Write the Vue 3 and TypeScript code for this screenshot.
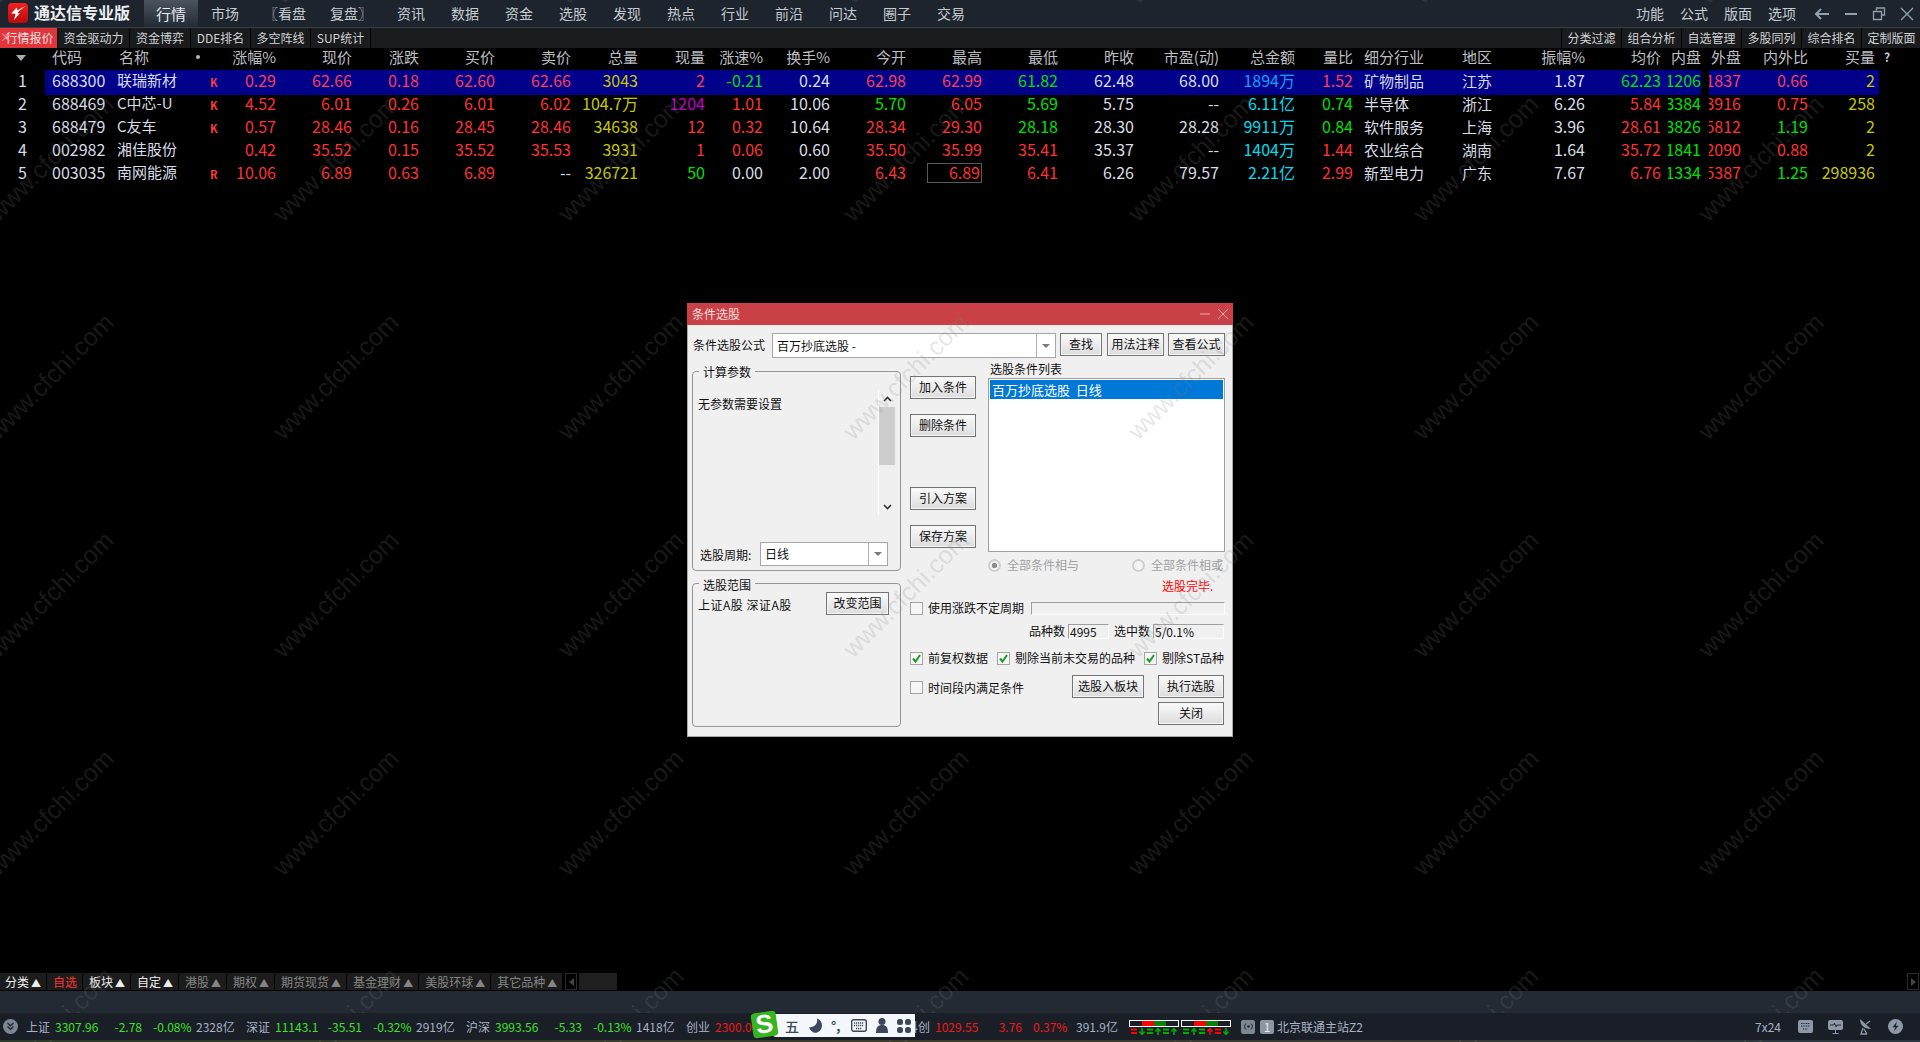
<script setup lang="ts">
type Cell = [string, string, boolean?]
type Mark = [string, boolean]
interface Row { code: string; name: string; mark: string; a: Cell[]; sector: string; region: string; b: Cell[] }

const rows: Row[] = [
  { code: '688300', name: '联瑞新材', mark: 'K',
    a: [['0.29','r'],['62.66','r'],['0.18','r'],['62.60','r'],['62.66','r'],['3043','y'],['2','r'],['-0.21','g'],['0.24','w'],['62.98','r'],['62.99','r'],['61.82','g'],['62.48','w'],['68.00','w'],['1894万','b'],['1.52','r']],
    sector: '矿物制品', region: '江苏',
    b: [['1.87','w'],['62.23','g'],['1206','g'],['1837','r'],['0.66','r'],['2','y']] },
  { code: '688469', name: 'C中芯-U', mark: 'K',
    a: [['4.52','r'],['6.01','r'],['0.26','r'],['6.01','r'],['6.02','r'],['104.7万','y'],['1204','p'],['1.01','r'],['10.06','w'],['5.70','g'],['6.05','r'],['5.69','g'],['5.75','w'],['--','w'],['6.11亿','c'],['0.74','g']],
    sector: '半导体', region: '浙江',
    b: [['6.26','w'],['5.84','r'],['3384','g'],['3916','r'],['0.75','r'],['258','y']] },
  { code: '688479', name: 'C友车', mark: 'K',
    a: [['0.57','r'],['28.46','r'],['0.16','r'],['28.45','r'],['28.46','r'],['34638','y'],['12','r'],['0.32','r'],['10.64','w'],['28.34','r'],['29.30','r'],['28.18','g'],['28.30','w'],['28.28','w'],['9911万','c'],['0.84','g']],
    sector: '软件服务', region: '上海',
    b: [['3.96','w'],['28.61','r'],['3826','g'],['5812','r'],['1.19','g'],['2','y']] },
  { code: '002982', name: '湘佳股份', mark: '',
    a: [['0.42','r'],['35.52','r'],['0.15','r'],['35.52','r'],['35.53','r'],['3931','y'],['1','r'],['0.06','r'],['0.60','w'],['35.50','r'],['35.99','r'],['35.41','r'],['35.37','w'],['--','w'],['1404万','c'],['1.44','r']],
    sector: '农业综合', region: '湖南',
    b: [['1.64','w'],['35.72','r'],['1841','g'],['2090','r'],['0.88','r'],['2','y']] },
  { code: '003035', name: '南网能源', mark: 'R',
    a: [['10.06','r'],['6.89','r'],['0.63','r'],['6.89','r'],['--','w'],['326721','y'],['50','g'],['0.00','w'],['2.00','w'],['6.43','r'],['6.89','r',true],['6.41','r'],['6.26','w'],['79.57','w'],['2.21亿','c'],['2.99','r']],
    sector: '新型电力', region: '广东',
    b: [['7.67','w'],['6.76','r'],['1334','g'],['5387','r'],['1.25','g'],['298936','y']] }
]

const headA = ['涨幅%','现价','涨跌','买价','卖价','总量','现量','涨速%','换手%','今开','最高','最低','昨收','市盈(动)','总金额','量比']
const headB = ['振幅%','均价','内盘','外盘','内外比','买量']
const menu = ['资讯','数据','资金','选股','发现','热点','行业','前沿','问达','圈子','交易']
const subLeft = ['行情报价','资金驱动力','资金博弈','DDE排名','多空阵线','SUP统计']
const subRight = ['分类过滤','组合分析','自选管理','多股同列','综合排名','定制版面']
const tabs: [string, string, boolean][] = [
  ['分类','on',true],['自选','red',false],['板块','on',true],['自定','on',true],['港股','dim',true],['期权','dim',true],
  ['期货现货','dim',true],['基金理财','dim',true],['美股环球','dim',true],['其它品种','dim',true]
]
const quotes = [
  { n: '上证', v: '3307.96', c: '-2.78', p: '-0.08%', a: '2328亿', k: 'up' },
  { n: '深证', v: '11143.1', c: '-35.51', p: '-0.32%', a: '2919亿', k: 'up' },
  { n: '沪深', v: '3993.56', c: '-5.33', p: '-0.13%', a: '1418亿', k: 'up' },
  { n: '创业', v: '2300.00', c: '', p: '', a: '', k: 'dn' },
  { n: '科创', v: '1029.55', c: '3.76', p: '0.37%', a: '391.9亿', k: 'dn' }
]
const meters: Mark[][] = [
  [['e', true], ['d', false], ['e', false], ['u', false], ['e', false], ['u', false]],
  [['e', false], ['u', false], ['e', false], ['u', true], ['e', true], ['d', false]]
]
const wm = Array.from({ length: 63 }, (_, i) => i)
</script>

<template>
  <div class="page">
    <header class="top">
      <svg class="logo" width="20" height="20" viewBox="0 0 20 20">
        <defs><linearGradient id="lg" x1="0" y1="0" x2="0" y2="1"><stop offset="0" stop-color="#f5201f"/><stop offset="1" stop-color="#b80b0c"/></linearGradient></defs>
        <rect width="20" height="20" rx="4" fill="url(#lg)"/>
        <path d="M17.5 3 L9.5 7.2 L8.6 4.6 L3.2 10.4 L7.6 10.8 L6 17 L11.6 10.6 L9.4 9.6 Z" fill="#fff"/>
      </svg>
      <span class="title">通达信专业版</span>
      <nav class="nav">
        <span class="item active">行情</span>
        <span class="item">市场</span>
        <span class="item wide">〖看盘</span>
        <span class="item wide">复盘〗</span>
        <span v-for="m in menu" :key="m" class="item">{{ m }}</span>
      </nav>
      <div class="right">
        <span>功能</span><span>公式</span><span>版面</span><span>选项</span>
        <svg class="win back" width="16" height="14" viewBox="0 0 16 14"><path d="M15 7H2M7 2L2 7l5 5" fill="none" stroke="#8fa0ae" stroke-width="2"/></svg>
        <svg class="win" width="14" height="14" viewBox="0 0 14 14"><path d="M1 7h12" stroke="#8fa0ae" stroke-width="2"/></svg>
        <svg class="win" width="14" height="14" viewBox="0 0 14 14"><path d="M4.5 3.5V1h8v7H10M1.500 4.500h8v8h-8z" fill="none" stroke="#8fa0ae" stroke-width="1.300"/></svg>
        <svg class="win" width="14" height="14" viewBox="0 0 14 14"><path d="M1 1l12 12M13 1L1 13" stroke="#8fa0ae" stroke-width="1.400"/></svg>
      </div>
    </header>

    <div class="subbar">
      <div class="sub-left">
        <span v-for="(s, i) in subLeft" :key="s" class="sub" :class="{ 'sub-on': i === 0 }">{{ s }}</span>
      </div>
      <div class="sub-right">
        <span v-for="s in subRight" :key="s" class="sub">{{ s }}</span>
      </div>
    </div>

    <main class="main">
      <section class="table">
        <div class="grid head">
          <div class="cell idx"><i class="sort"></i></div>
          <div class="cell code hc">代码</div>
          <div class="cell name hn">名称</div>
          <div class="cell mark"><b class="dot"></b></div>
          <div v-for="h in headA" :key="h" class="cell num">{{ h }}</div>
          <div class="cell sector">细分行业</div>
          <div class="cell region">地区</div>
          <div v-for="(h, j) in headB" :key="h" class="cell num" :class="{ avg: j === 1, gap8: j === 3 }">{{ h }}</div>
          <div class="cell"></div>
          <div class="cell qm">?</div>
        </div>
        <div v-for="(r, i) in rows" :key="r.code" class="grid row" :class="{ sel: i === 0 }">
          <div class="cell idx">{{ i + 1 }}</div>
          <div class="cell code">{{ r.code }}</div>
          <div class="cell name">{{ r.name }}</div>
          <div class="cell mark"><span class="flag">{{ r.mark }}</span></div>
          <div v-for="(c, j) in r.a" :key="j" class="cell num v" :class="c[1]">
            <span :class="{ box: c[2] }">{{ c[0] }}</span>
          </div>
          <div class="cell sector">{{ r.sector }}</div>
          <div class="cell region">{{ r.region }}</div>
          <div v-for="(c, j) in r.b" :key="'b' + j" class="cell num v" :class="[c[1], { avg: j === 1, clip: j === 2 || j === 3, gap8: j === 3 }]">
            <span>{{ c[0] }}</span>
          </div>
          <div class="cell"></div>
        </div>
      </section>

      <section class="dialog">
        <div class="dlg-title">
          <span>条件选股</span>
          <span class="dlg-win">
            <svg width="10" height="10" viewBox="0 0 10 10"><path d="M0 5h10" stroke="#eea9ab"/></svg>
            <svg width="10" height="10" viewBox="0 0 10 10"><path d="M0 0l10 10M10 0L0 10" stroke="#eea9ab"/></svg>
          </span>
        </div>
        <div class="dlg-body">
          <div class="formula">
            <label class="f-label">条件选股公式</label>
            <div class="combo f-combo"><span class="combo-text">百万抄底选股 -</span><span class="combo-btn"><i></i></span></div>
            <button class="btn b42">查找</button>
            <button class="btn b57 g5">用法注释</button>
            <button class="btn b57">查看公式</button>
          </div>
          <div class="panes">
            <div class="left">
              <div class="group g1">
                <span class="legend">计算参数</span>
                <div class="params">
                  <div class="params-text">无参数需要设置</div>
                  <div class="scroll">
                    <span class="sb"><svg width="9" height="6" viewBox="0 0 9 6"><path d="M1 5l3.500-3.500L8 5" fill="none" stroke="#333" stroke-width="1.600"/></svg></span>
                    <span class="thumb"></span>
                    <span class="sb end"><svg width="9" height="6" viewBox="0 0 9 6"><path d="M1 1l3.500 3.500L8 1" fill="none" stroke="#333" stroke-width="1.600"/></svg></span>
                  </div>
                </div>
                <div class="period">
                  <label>选股周期:</label>
                  <div class="combo p-combo"><span class="combo-text">日线</span><span class="combo-btn"><i></i></span></div>
                </div>
              </div>
              <div class="group g2">
                <span class="legend">选股范围</span>
                <div class="scope">
                  <span class="scope-text">上证A股 深证A股</span>
                  <button class="btn b63">改变范围</button>
                </div>
              </div>
            </div>
            <div class="rightcol">
              <div class="upper">
                <div class="mid">
                  <button class="btn b66">加入条件</button>
                  <button class="btn b66">删除条件</button>
                  <button class="btn b66 far">引入方案</button>
                  <button class="btn b66">保存方案</button>
                </div>
                <div class="listcol">
                  <div class="list-label">选股条件列表</div>
                  <div class="list"><div class="list-sel">百万抄底选股&nbsp;&nbsp;日线</div></div>
                  <div class="radios">
                    <span class="radio-item"><i class="radio on"></i>全部条件相与</span>
                    <span class="radio-item"><i class="radio"></i>全部条件相或</span>
                  </div>
                </div>
              </div>
              <div class="done">选股完毕.</div>
              <div class="line-period">
                <i class="cb"></i><span class="cb-label">使用涨跌不定周期</span><span class="field grow"></span>
              </div>
              <div class="counts">
                <span>品种数</span><span class="field w41">4995</span>
                <span class="ml">选中数</span><span class="field w71">5/0.1%</span>
              </div>
              <div class="checks">
                <span class="chk c1"><i class="cb"><svg width="11" height="11" viewBox="0 0 11 11"><path d="M2 5.500l2.500 3L9 2" fill="none" stroke="#1d9a2c" stroke-width="2"/></svg></i><span class="cb-label">前复权数据</span></span>
                <span class="chk c2"><i class="cb"><svg width="11" height="11" viewBox="0 0 11 11"><path d="M2 5.500l2.500 3L9 2" fill="none" stroke="#1d9a2c" stroke-width="2"/></svg></i><span class="cb-label">剔除当前未交易的品种</span></span>
                <span class="chk"><i class="cb"><svg width="11" height="11" viewBox="0 0 11 11"><path d="M2 5.500l2.500 3L9 2" fill="none" stroke="#1d9a2c" stroke-width="2"/></svg></i><span class="cb-label">剔除ST品种</span></span>
              </div>
              <div class="actions">
                <span class="chk timed"><i class="cb"></i><span class="cb-label">时间段内满足条件</span></span>
                <button class="btn b72">选股入板块</button>
                <button class="btn b66">执行选股</button>
              </div>
              <div class="close"><button class="btn b66">关闭</button></div>
            </div>
          </div>
        </div>
      </section>

      <div class="tabs">
        <span v-for="t in tabs" :key="t[0]" class="tab" :class="t[1]">{{ t[0] }}<em v-if="t[2]" class="tri">▲</em></span>
        <span class="tscroll"><i class="tl"></i></span>
        <span class="tblock"></span>
        <span class="tscroll endscroll"><i class="tr"></i></span>
      </div>

      <div class="wm" aria-hidden="true">
        <div v-for="n in wm" :key="n" class="wm-cell"><span>www.cfchi.com</span></div>
      </div>
    </main>

    <div class="band"></div>

    <footer class="status">
      <svg class="st-first" width="15" height="15" viewBox="0 0 15 15">
        <circle cx="7.500" cy="7.500" r="7.500" fill="#7b8794"/>
        <path d="M4.500 4l3 2.800L10.500 4M4.500 7.500l3 2.800 3-2.800" fill="none" stroke="#20262e" stroke-width="1.300"/>
      </svg>
      <div v-for="q in quotes" :key="q.n" class="quote" :class="q.k">
        <span class="q-n">{{ q.n }}</span>
        <span class="q-v">{{ q.v }}</span>
        <span class="q-c">{{ q.c }}</span>
        <span class="q-p">{{ q.p }}</span>
        <span class="q-a">{{ q.a }}</span>
      </div>
      <div v-for="(ms, k) in meters" :key="k" class="meter" :class="{ m2: k === 1 }">
        <div class="m-bar"><i></i><i class="mr"></i><i class="mg"></i><i></i></div>
        <svg width="50" height="7" viewBox="0 0 50 7">
          <g v-for="(m, i) in ms" :key="i" :transform="`translate(${i * 8 + 2} 0)`">
            <path v-if="m[0] === 'e'" d="M0 1.500h6M0 5h6" :stroke="m[1] ? '#f00' : '#0a0'" stroke-width="2"/>
            <path v-else-if="m[0] === 'u'" d="M3 7V1M.5 3.500L3 .5l2.500 3" fill="none" :stroke="m[1] ? '#f00' : '#0a0'" stroke-width="1.600"/>
            <path v-else d="M3 0v6M.5 3.500L3 6.500l2.500-3" fill="none" :stroke="m[1] ? '#f00' : '#0a0'" stroke-width="1.600"/>
          </g>
        </svg>
      </div>
      <span class="chip sig">
        <svg width="9" height="9" viewBox="0 0 9 9"><circle cx="4.500" cy="4.500" r="1.300" fill="#20262e"/><path d="M2 1.500a4 4 0 000 6M7 1.500a4 4 0 010 6" fill="none" stroke="#20262e"/></svg>
      </span>
      <span class="chip num1">1</span>
      <span class="server">北京联通主站Z2</span>
      <span class="spacer"></span>
      <span class="sevenx">7x24</span>
      <svg class="ic" width="15" height="13" viewBox="0 0 15 13"><rect width="15" height="13" rx="2" fill="#8d99a8"/><path d="M3 3.500h9M3 6h9M5 9h5" stroke="#20262e" stroke-dasharray="1 .7"/></svg>
      <svg class="ic" width="15" height="14" viewBox="0 0 15 14"><rect width="15" height="10" rx="2" fill="#8d99a8"/><path d="M2 5h3.500l1-2 1.500 4 1-2h4" fill="none" stroke-width="1" stroke="#20262e"/><path d="M7.500 10v3M4.500 13.500h6" stroke="#8d99a8"/></svg>
      <svg class="ic" width="15" height="17" viewBox="0 0 15 17"><path d="M2 1c0 6 4 10 11 10z" fill="#8d99a8"/><path d="M8 6l4-3M5 10l-2 6h6M6 11l3 5" stroke="#8d99a8" fill="none" stroke-width="1.300"/></svg>
      <svg class="ic" width="15" height="15" viewBox="0 0 15 15"><circle cx="7.500" cy="7.500" r="7.500" fill="#8d99a8"/><path d="M9 2.500L4.500 8.300h2.700L6 12.500l4.500-5.800H7.800z" fill="#20262e"/></svg>

      <div class="ime">
        <div class="ime-logo"><span>S</span></div>
        <div class="ime-panel">
          <span class="ime-wu">五</span>
          <svg width="14" height="15" viewBox="0 0 14 15"><path d="M9 0c1 5-2 9-8 9 1.500 4 5 6 8 5s5-4 5-7-2-6-5-7z" fill="#3c4759" transform="translate(0 .5)"/></svg>
          <span class="ime-p">°,</span>
          <svg width="16" height="13" viewBox="0 0 16 13"><rect x=".7" y=".7" width="14.600" height="11.600" rx="2" fill="none" stroke="#3c4759" stroke-width="1.400"/><path d="M3 4h10M3 6.500h10M5 9.500h6" stroke="#3c4759" stroke-width="1.400" stroke-dasharray="1.200 .8"/></svg>
          <svg width="12" height="15" viewBox="0 0 12 15"><circle cx="6" cy="3.500" r="3.500" fill="#3c4759"/><path d="M0 15c0-6 2-8 6-8s6 2 6 8z" fill="#3c4759"/></svg>
          <svg width="14" height="14" viewBox="0 0 14 14" fill="#3c4759"><rect width="6" height="6" rx="2.500"/><rect x="8" width="6" height="6" rx="2.500"/><rect y="8" width="6" height="6" rx="2.500"/><rect x="8" y="8" width="6" height="6" rx="2.500"/></svg>
        </div>
      </div>
    </footer>
    <div class="strip"></div>
  </div>
</template>

<style>
html, body { margin: 0; background: #000; overflow: hidden; }
</style>

<style scoped>
.page {
  width: 1920px; height: 1042px; display: flex; flex-direction: column; background: #000; overflow: hidden;
  font-family: "Noto Sans CJK SC", "Liberation Sans", sans-serif;
}
.top {
  height: 27px; flex: none; display: flex; align-items: stretch; background: #1d242e;
  border-bottom: 1px solid #3a4048; color: #c6cbd0; font-size: 14px; line-height: 27px;
}
.logo { margin: 3px 0 0 8px; flex: none; }
.title { width: 110px; margin-left: 6px; color: #eceff2; font-size: 16px; font-weight: 700; line-height: 25px; }
.nav { display: flex; }
.item { width: 54px; text-align: center; }
.wide { width: 66px; }
.active { background: linear-gradient(#4a545f, #222a35); color: #e8ecef; font-size: 15px; }
.right { margin-left: auto; display: flex; align-items: center; gap: 14px; padding-right: 6px; line-height: 25px; }
.right span { width: 28px; margin-right: 2px; }
.win { flex: none; }
.back { margin-left: 2px; }
.subbar {
  height: 20px; flex: none; display: flex; justify-content: space-between; background: #1a1b1d;
  font-size: 12px; line-height: 20px; color: #cfd3d6;
}
.sub-left { display: grid; grid-template-columns: 58px 72px 61px 60px 60px 60px; }
.sub-right { display: grid; grid-template-columns: repeat(6, 60px); margin-right: -1px; }
.sub { text-align: center; border-right: 1px solid #000; white-space: nowrap; position: relative; }
.sub-right .sub { border-right: 0; border-left: 1px solid #000; }
.sub-on { background: #e0353b; color: #f6e3e3; padding-left: 2px; }
.sub-on::before { content: "×"; position: absolute; left: 0; top: -1px; color: #f2a0a2; }

.main { flex: 1; min-height: 0; position: relative; display: flex; flex-direction: column; }
.table { flex: 1; min-height: 0; }
.grid {
  display: grid;
  grid-template-columns: 45px 72px 75px 33px 51px 76px 67px 76px 76px 67px 67px 58px 67px 76px 76px 76px 76px 85px 76px 58px 109px 63px 60px 83px 33px 40px 67px 67px 4px 41px;
}
.head { height: 22px; line-height: 18px; color: #bdbfc2; font-size: 15px; }
.row { height: 23px; line-height: 21px; font-size: 15px; color: #d6dde6; }
.cell { white-space: nowrap; min-width: 0; }
.idx { text-align: center; font-size: 16px; }
.head .idx { display: flex; align-items: center; justify-content: center; padding-right: 4px; padding-bottom: 2px; }
.sort { width: 0; height: 0; border: 5px solid transparent; border-top: 6px solid #a8acb0; border-bottom: 0; }
.code { padding-left: 7px; font-size: 16px; }
.head .code { font-size: 15px; }
.hn { padding-left: 2px; }
.row .name { line-height: 19px; }
.dot { display: block; width: 4px; height: 4px; border-radius: 50%; background: #b8b8b8; margin: 7px 0 0 4px; }
.flag { display: block; margin-left: 18px; font-size: 11px; font-weight: 700; color: #ff3c3c; line-height: 25px; }
.num { text-align: right; }
.num.v { font-size: 16px; }
.avg { padding-right: 7px; }
.gap8 { margin-left: 8px; }
.clip { display: flex; justify-content: flex-end; overflow: hidden; }
.sector { padding-left: 11px; }
.qm { padding-left: 5px; font-size: 12px; font-weight: 700; color: #ccc; }
.sel > .cell:not(:first-child) { background: #00008b; }
.r { color: #ff3232; }
.sel .r { color: #ff3c55; }
.g { color: #00e000; }
.y { color: #c8c800; }
.w { color: #d8dee6; }
.c { color: #00dcee; }
.b { color: #00a4ff; }
.p { color: #c000c8; }
.box {
  display: inline-block; width: 55px; height: 20px; box-sizing: border-box; border: 1px solid #5a5a5a;
  line-height: 17px; padding-right: 1px; vertical-align: top; margin-top: 1px;
}

.dialog {
  position: absolute; left: 687px; top: 255px; width: 546px; height: 434px; box-sizing: border-box;
  background: #f0f0f0; border: 1px solid #a8a8a8; border-top: 0; color: #111; font-size: 12px;
}
.dlg-title {
  height: 22px; margin: 0 -1px; background: #c94146; color: #f7dede; line-height: 21px; padding-left: 5px;
  display: flex; justify-content: space-between;
}
.dlg-win { display: flex; align-items: center; gap: 8px; padding-right: 5px; }
.dlg-body { padding-left: 4px; }
.formula { display: flex; align-items: flex-start; height: 25px; margin: 8px 0 0 1px; gap: 4px; }
.f-label { width: 75px; line-height: 23px; }
.combo {
  display: flex; box-sizing: border-box; background: #fff; border: 1px solid #a6a6a6;
}
.f-combo { width: 284px; height: 25px; }
.p-combo { width: 128px; height: 24px; }
.combo-text { flex: 1; padding-left: 4px; line-height: 22px; }
.f-combo .combo-text { line-height: 24px; }
.combo-btn { width: 18px; border-left: 1px solid #b0b0b0; display: flex; align-items: center; justify-content: center; }
.combo-btn i { width: 0; height: 0; border: 4px solid transparent; border-top: 4px solid #7a7a7a; border-bottom: 0; }
.btn {
  box-sizing: border-box; height: 23px; padding: 0 0 2px; font: inherit; color: #111; flex: none;
  background: linear-gradient(#fbfbfb, #dcdcdc); border: 1px solid #757575; box-shadow: inset 0 0 0 1px #f6f6f6;
}
.b42 { width: 42px; }
.g5 { margin-left: 1px; }
.b57 { width: 57px; }
.b63 { width: 63px; }
.b66 { width: 66px; }
.b72 { width: 72px; }
.panes { display: flex; gap: 9px; }
.left { width: 209px; flex: none; }
.group { position: relative; box-sizing: border-box; border: 1px solid #979797; border-radius: 4px; }
.g1 { height: 200px; margin-top: 13px; padding: 0 5px; }
.g2 { height: 144px; margin-top: 12px; padding: 0 5px; }
.legend { position: absolute; left: 6px; top: -8px; padding: 0 4px; background: #f0f0f0; line-height: 16px; }
.g2 .legend { top: -7px; }
.params { display: flex; height: 125px; margin-top: 18px; }
.params-text { flex: 1; padding-top: 5px; line-height: 18px; }
.scroll { width: 16px; border-left: 1px solid #fff; display: flex; flex-direction: column; }
.sb { height: 17px; display: flex; align-items: center; justify-content: center; flex: none; }
.thumb { height: 58px; background: #cdcdcd; flex: none; }
.end { margin-top: auto; }
.period { display: flex; align-items: center; margin-top: 27px; padding-left: 2px; }
.period label { width: 60px; }
.scope { display: flex; justify-content: space-between; align-items: flex-start; margin-top: 8px; padding-right: 6px; }
.scope-text { padding-top: 4px; line-height: 18px; letter-spacing: .5px; }
.rightcol { width: 315px; flex: none; }
.upper { display: flex; gap: 12px; height: 215px; }
.mid { width: 66px; display: flex; flex-direction: column; gap: 15px; padding-top: 18px; flex: none; }
.far { margin-top: 35px; }
.listcol { width: 237px; flex: none; }
.list-label { margin-top: 4px; line-height: 14px; padding-left: 2px; }
.list { height: 174px; box-sizing: border-box; margin-top: 2px; background: #fff; border: 1px solid #a0a0a0; padding: 1px; }
.list-sel { height: 19px; background: #0078d7; color: #fff; font-size: 13px; line-height: 19px; padding-left: 2px; }
.radios { display: flex; justify-content: space-between; margin-top: 5px; line-height: 16px; color: #a2a2a2; }
.radio-item { display: flex; align-items: center; gap: 6px; margin-right: 2px; }
.radio { width: 9px; height: 9px; border: 2px solid #cfcfcf; border-radius: 50%; box-sizing: content-box; background: #f4f4f4; }
.radio.on { background: radial-gradient(circle, #8d8d8d 0 2.500px, #f4f4f4 3px); }
.done { margin-top: 5px; height: 16px; line-height: 16px; padding-left: 252px; color: #f00; }
.line-period { display: flex; align-items: center; height: 14px; margin-top: 7px; }
.cb {
  width: 13px; height: 13px; box-sizing: border-box; flex: none; border: 1px solid #a6a6a6; background: #f6f6f6;
  display: inline-flex; align-items: center; justify-content: center;
}
.cb-label { margin-left: 5px; white-space: nowrap; line-height: 16px; }
.field {
  box-sizing: border-box; display: block; height: 15px; line-height: 14px; padding-left: 1px; background: #f0f0f0;
  border: 1px solid #fff; border-top-color: #a0a0a0; border-left-color: #a0a0a0;
}
.grow { flex: 1; height: 13px; margin-left: 7px; }
.counts { display: flex; height: 15px; margin-top: 9px; padding-left: 119px; line-height: 14px; }
.counts > span:not(.field) { width: 39px; }
.counts .ml { margin-left: 5px; }
.w41 { width: 41px; }
.w71 { width: 71px; }
.checks { display: flex; height: 16px; margin-top: 11px; }
.chk { display: flex; align-items: center; }
.c1 { width: 87px; }
.c2 { width: 147px; }
.actions { display: flex; margin-top: 9px; }
.timed { width: 162px; padding-top: 2px; }
.actions .b66 { margin-left: 14px; }
.close { display: flex; justify-content: flex-end; margin-top: 4px; padding-right: 1px; }
.actions .b66:last-child { margin-right: 1px; }

.tabs {
  flex: none; height: 17px; margin-bottom: 1px; display: flex; font-size: 12px; line-height: 17px; margin-left: -1px;
}
.tab {
  padding: 0 5px 0 6px; background: #1c1c1c; border-right: 1px solid #000; white-space: nowrap; box-sizing: border-box; flex: none;
}
.tab.on { color: #eee; }
.tab.red { color: #ff3232; }
.tab.dim { color: #858585; }
.tri { font-style: normal; display: inline-block; width: 10px; margin-left: 2px; font-size: 10px; text-align: center; }
.tscroll { width: 12px; margin-left: 2px; box-sizing: border-box; border: 1px solid #2b2b2b; display: flex; align-items: center; justify-content: center; flex: none; }
.tl, .tr { width: 0; height: 0; border: 4px solid transparent; }
.tl { border-right: 5px solid #444; border-left: 0; }
.tr { border-left: 5px solid #444; border-right: 0; }
.tblock { width: 38px; margin-left: 2px; background: #1f1f1f; flex: none; }
.endscroll { margin-left: auto; margin-right: 1px; }

.wm {
  position: absolute; left: -92px; top: -217px; display: grid; grid-template-columns: repeat(9, 285px);
  grid-auto-rows: 218px; pointer-events: none; width: 2565px;
}
.wm-cell { display: flex; align-items: center; justify-content: center; }
.wm-cell span {
  transform: rotate(-45deg); font: 25px "Liberation Sans", sans-serif; color: rgba(128, 128, 128, .2); white-space: nowrap;
}

.band { height: 22px; flex: none; background: #232a33; }
.status {
  height: 27px; flex: none; position: relative; display: flex; align-items: center; background: #1a1f27;
  font-size: 12px; color: #a7b2c6; padding-left: 3px;
}
.st-first { flex: none; margin-right: 8px; }
.quote { width: 220px; flex: none; display: grid; grid-template-columns: 29px 46px 41px 51px auto; white-space: nowrap; justify-content: start; }
.q-c { text-align: right; }
.q-p { padding-left: 11px; }
.q-a { margin-left: 3px; }
.up .q-v, .up .q-c, .up .q-p { color: #3fe02a; }
.dn .q-v, .dn .q-c, .dn .q-p { color: #f01818; }
.meter { width: 50px; flex: none; margin-left: 3px; display: flex; flex-direction: column; gap: 1px; margin-top: 1px; }
.m2 { margin-left: 2px; }
.m-bar { height: 7px; box-sizing: border-box; border: 1px solid #fff; display: grid; grid-template-columns: repeat(4, 1fr); }
.m-bar .mr { background: #f00; }
.m-bar .mg { background: #0a800a; }
.chip { width: 14px; height: 14px; border-radius: 2px; background: #7d8794; display: flex; align-items: center; justify-content: center; flex: none; }
.sig { margin-left: 10px; }
.num1 { margin-left: 5px; color: #e6e9ee; background: #8c96a3; }
.server { margin-left: 3px; }
.spacer { flex: 1; }
.sevenx { margin-right: 17px; }
.ic { flex: none; margin-right: 15px; }
.ic:last-of-type { margin-right: 17px; }
.ime { position: absolute; left: 752px; top: -2px; display: flex; align-items: center; }
.ime-logo {
  width: 25px; height: 25px; background: #35b51f; border-radius: 4px; transform: rotate(-8deg); display: flex; align-items: center;
  justify-content: center; color: #fff; font: 700 26px "Liberation Sans", sans-serif; position: relative; z-index: 1;
}
.ime-panel {
  width: 141px; height: 23px; margin-left: -3px; background: #f4f7fb; display: flex; align-items: center; gap: 9px;
  padding-left: 11px; box-sizing: border-box; color: #3c4759; margin-top: 3px;
}
.ime-wu { font-size: 14px; font-weight: 500; }
.ime-p { font-size: 13px; font-weight: 700; width: 11px; }
.strip { height: 2px; flex: none; background: linear-gradient(90deg, #2b3a2a, #3d3c2b 50%, #2b3640); }
</style>
